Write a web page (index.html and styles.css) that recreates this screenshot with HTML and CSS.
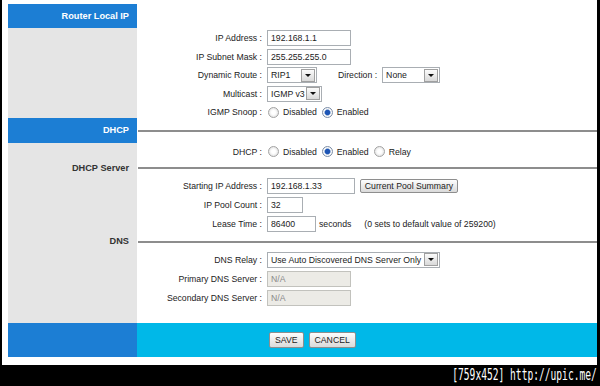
FILE: index.html
```html
<!DOCTYPE html>
<html lang="en">

<head>
    <meta charset="UTF-8">
    <title>Router Local IP</title>
    <link rel="stylesheet" href="styles.css">
</head>

<body>
    <div class="frame">

        <div class="sec title">
            <div class="side blue">Router Local IP</div>
            <div class="main"></div>
        </div>

        <div class="sec lan">
            <div class="side"></div>
            <div class="main rows r185">
                <div class="row"><span class="lbl">IP Address :</span><input class="txt w84" value="192.168.1.1"></div>
                <div class="row"><span class="lbl">IP Subnet Mask :</span><input class="txt w84" value="255.255.255.0"></div>
                <div class="row">
                    <span class="lbl">Dynamic Route :</span>
                    <div class="sel w50"><span class="val">RIP1</span><i class="arr"></i></div>
                    <span class="lbl2">Direction :</span>
                    <div class="sel w58"><span class="val">None</span><i class="arr"></i></div>
                </div>
                <div class="row">
                    <span class="lbl">Multicast :</span>
                    <div class="sel w55"><span class="val">IGMP v3</span><i class="arr"></i></div>
                </div>
                <div class="row">
                    <span class="lbl">IGMP Snoop :</span>
                    <label class="opt"><i class="rad"></i>Disabled</label>
                    <label class="opt"><i class="rad on"></i>Enabled</label>
                </div>
            </div>
        </div>

        <div class="sec band">
            <div class="side blue">DHCP</div>
            <div class="main rule"></div>
        </div>

        <div class="sec">
            <div class="side"></div>
            <div class="main rows r17">
                <div class="row">
                    <span class="lbl">DHCP :</span>
                    <label class="opt"><i class="rad"></i>Disabled</label>
                    <label class="opt"><i class="rad on"></i>Enabled</label>
                    <label class="opt"><i class="rad"></i>Relay</label>
                </div>
            </div>
        </div>

        <div class="sec sub">
            <div class="side">DHCP Server</div>
            <div class="main rule"></div>
        </div>

        <div class="sec">
            <div class="side"></div>
            <div class="main rows">
                <div class="row">
                    <span class="lbl">Starting IP Address :</span>
                    <input class="txt w88" value="192.168.1.33">
                    <button class="btn pool">Current Pool Summary</button>
                </div>
                <div class="row"><span class="lbl">IP Pool Count :</span><input class="txt w36" value="32"></div>
                <div class="row">
                    <span class="lbl">Lease Time :</span>
                    <input class="txt w49" value="86400">
                    <span class="note">seconds</span>
                    <span class="note wide">(0 sets to default value of 259200)</span>
                </div>
            </div>
        </div>

        <div class="sec sub dns">
            <div class="side">DNS</div>
            <div class="main rule"></div>
        </div>

        <div class="sec last">
            <div class="side"></div>
            <div class="main rows">
                <div class="row">
                    <span class="lbl">DNS Relay :</span>
                    <div class="sel w173"><span class="val">Use Auto Discovered DNS Server Only</span><i class="arr"></i></div>
                </div>
                <div class="row"><span class="lbl">Primary DNS Server :</span><input class="txt w84" value="N/A" disabled></div>
                <div class="row"><span class="lbl">Secondary DNS Server :</span><input class="txt w84" value="N/A" disabled></div>
            </div>
        </div>

        <div class="sec foot">
            <div class="side blue"></div>
            <div class="main">
                <button class="btn">SAVE</button>
                <button class="btn">CANCEL</button>
            </div>
        </div>

    </div>

    <div class="caption"><span>[759x452] http://upic.me/</span></div>
</body>

</html>
```

FILE: styles.css
```css
html,
body {
    margin: 0;
    background-color: #000;
    height: 386px;
    overflow: hidden;
}

body {
    font-family: "Liberation Sans", Arial, sans-serif;
    font-size: 8.7px;
    color: #222;
}

.frame {
    width: 595px;
    margin-left: 2px;
    padding: 4px 0 8px 6px;
    box-sizing: border-box;
    background-color: #fff;
}

.sec {
    display: flex;
}

.side {
    width: 129px;
    flex: none;
    background-color: #e5e5e5;
    box-sizing: border-box;
    padding-right: 8px;
    text-align: right;
    font-weight: bold;
    font-size: 9.2px;
}

.side.blue {
    background-color: #1c7ed4;
    color: #fff;
}

.main {
    flex: 1;
    background-color: #fff;
}

/* section heights */

.title {
    height: 24px;
}

.title .side {
    line-height: 24px;
}

.lan {
    height: 90px;
}

.band {
    height: 25px;
}

.band .side {
    line-height: 25px;
}

.sub {
    height: 16px;
}

.sub .side {
    line-height: 16px;
    color: #333;
}

.dns {
    height: 17px;
}

.dns .side {
    line-height: 17px;
}

.last {
    height: 73px;
}

.foot {
    height: 34px;
}

.foot .main {
    background-color: #00b8e8;
    display: flex;
    align-items: center;
    padding-left: 132px;
    gap: 5px;
}

/* horizontal rule in header rows */

.rule {
    display: flex;
    align-items: center;
}

.rule::before {
    content: "";
    flex: 1;
    height: 2px;
    margin-left: 1px;
    background-color: #8d8d8d;
}

/* form rows */

.rows {
    display: flex;
    flex-direction: column;
}

.row {
    display: flex;
    align-items: center;
    height: 19px;
    flex: none;
}

.r185 {
    padding-top: 1px;
}

.r185 .row {
    height: 18.5px;
}

.r17 .row {
    height: 17px;
}

.lbl {
    width: 125px;
    text-align: right;
    margin-right: 5px;
    flex: none;
    white-space: nowrap;
}

.lbl2 {
    margin: 0 5px 0 21px;
}

.txt {
    height: 16px;
    box-sizing: border-box;
    border: 1px solid #a9aeb3;
    padding: 0 3px;
    font-family: inherit;
    font-size: 8.7px;
    color: #222;
    background-color: #fff;
    outline: none;
}

.txt:disabled {
    background-color: #ecebe6;
    color: #8a8a8a;
    border-color: #c2c2bd;
}

.w36 {
    width: 36px;
}

.w49 {
    width: 49px;
}

.w84 {
    width: 84px;
}

.w88 {
    width: 88px;
}

/* drop-down boxes */

.sel {
    height: 16px;
    box-sizing: border-box;
    border: 1px solid #a9aeb3;
    background-color: #fff;
    display: flex;
    align-items: center;
    padding-left: 3px;
}

.sel .val {
    flex: 1;
    white-space: nowrap;
}

.arr {
    width: 12px;
    height: 11px;
    flex: none;
    margin: 0 1px 0 1px;
    border: 1px solid #a0a0a0;
    background: linear-gradient(#fbfbfb, #d9d9d9);
    display: flex;
    align-items: center;
    justify-content: center;
}

.arr::after {
    content: "";
    border-left: 3px solid transparent;
    border-right: 3px solid transparent;
    border-top: 3px solid #111;
}

.w50 {
    width: 50px;
}

.w55 {
    width: 55px;
}

.w58 {
    width: 58px;
}

.w173 {
    width: 173px;
}

/* radio buttons */

.opt {
    display: flex;
    align-items: center;
    margin-right: 4px;
}

.rad {
    width: 9px;
    height: 9px;
    border-radius: 50%;
    border: 1px solid #a3a3a3;
    background: radial-gradient(circle, #fff 30%, #d6d6d6 100%);
    margin: 0 4px 0 1px;
}

.rad.on {
    border-color: #7c8ea8;
    background: radial-gradient(circle, #1d55b5 0 2.2px, #9fb8dd 3px, #fff 3.6px, #d6d6d6 100%);
}

/* buttons */

.btn {
    height: 16px;
    padding: 0 5px;
    border: 1px solid #8e8e8e;
    border-radius: 2px;
    background: linear-gradient(#fdfdfd, #dadada);
    font-family: inherit;
    font-size: 8.7px;
    color: #222;
}

.pool {
    margin-left: 5px;
    height: 14px;
    width: 98px;
    padding: 0;
}

.note {
    margin-left: 3px;
}

.note.wide {
    margin-left: 13px;
}

/* upload stamp */

.caption {
    text-align: right;
    padding-right: 3px;
    height: 21px;
    line-height: 21px;
    color: #fff;
}

.caption span {
    display: inline-block;
    font-family: "DejaVu Sans Mono", monospace;
    font-size: 15px;
    transform: scaleX(0.64);
    transform-origin: right center;
}
```
